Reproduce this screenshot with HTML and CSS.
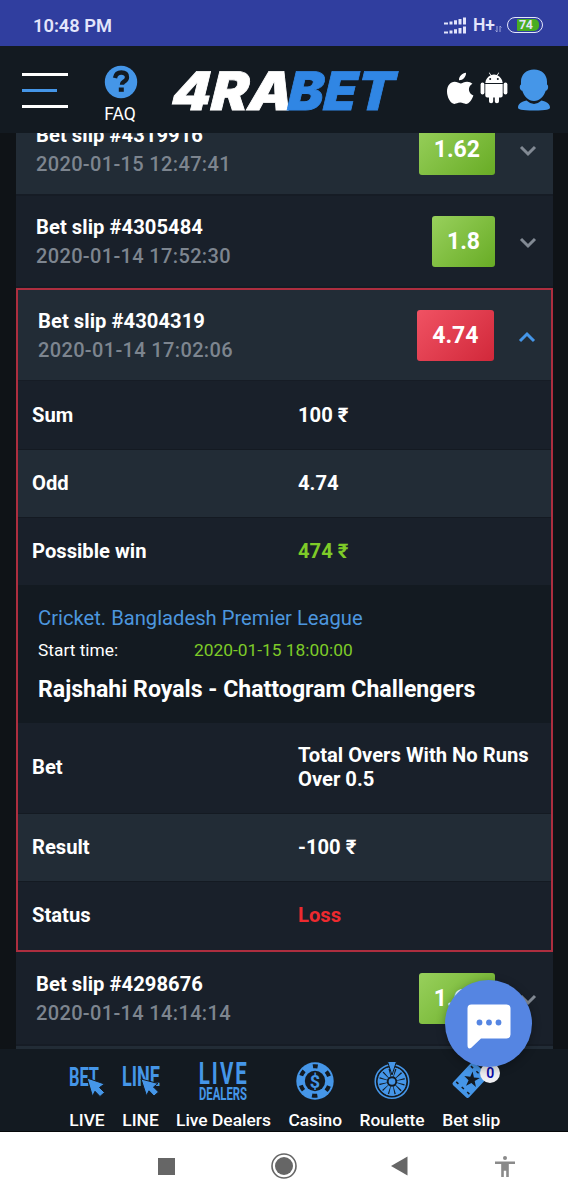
FILE: index.html
```html
<!DOCTYPE html>
<html lang="en">

<head>
    <meta charset="UTF-8">
    <meta name="viewport" content="width=device-width, initial-scale=1.0">
    <title>4RABET - Bet history</title>
    <link rel="stylesheet" href="styles.css">
</head>

<body>
    <!-- Status bar -->
    <div class="status-bar">
        <span class="clock">10:48 PM</span>
        <svg class="signal" width="22" height="17" viewBox="0 0 22 17" fill="#e3e5fb">
            <path d="M0 5.500h4v2H0zM5.500 4.500h3v3h-3zM10 3.200h3v4.300h-3zM14.500 2h3v5.500h-3zM19 .500h3v7h-3zM0 14.500h4v2H0zM5.500 13.500h3v3h-3zM10 12.200h3v4.300h-3zM14.500 11h3v5.500h-3zM19 9.500h3v7h-3z"/>
        </svg>
        <span class="network">H+</span>
        <svg class="arrows" width="7" height="8" viewBox="0 0 7 8" fill="none" stroke="#9fa6dc">
            <path d="M2 1v6L.5 5.500M5 7V1l1.500 1.500"/>
        </svg>
        <span class="battery"><span class="battery-level">74</span></span>
    </div>

    <!-- Header -->
    <header class="header">
        <div class="menu-icon"><i></i><i></i><i></i></div>
        <div class="faq">
            <svg width="34" height="34" viewBox="0 0 34 34">
                <circle cx="17" cy="17" r="16.200" fill="#4596e8"/>
                <path d="M11 13q1-5.500 6.300-5.500 5.700 0 5.700 4.700 0 2.300-2.700 4.200-2.300 1.500-2.300 3.400" fill="none" stroke="#131a21" stroke-width="4.300"/>
                <path d="M14.800 22.500h5v4.300h-5z" fill="#131a21"/>
            </svg>
            <span>FAQ</span>
        </div>
        <svg class="logo" width="230" height="50" viewBox="0 0 230 50">
            <g transform="translate(1 45) skewX(-4)">
                <text class="logo-text" x="-1" y="0" textLength="121" lengthAdjust="spacingAndGlyphs" fill="#fff" stroke="#fff">4RA</text>
                <text class="logo-text" x="115" y="0" textLength="106" lengthAdjust="spacingAndGlyphs" fill="#3086e4" stroke="#3086e4">BET</text>
            </g>
        </svg>
        <svg class="apple" width="28" height="33" viewBox="0 0 28 33" fill="#fff">
            <path d="M20 .800c.3 4-3.200 7.700-7 7.500C12.800 4.600 16.200 1 20 .800zM26.400 11.700c-5.200 3.200-4.300 9.500 1 11.700-1.400 4-4.200 8.500-7.400 8.500-2.300 0-3-1.300-5.800-1.300s-3.600 1.300-5.800 1.300C4.600 31.900 1 25.300 1 19.600c0-6 3.500-9.800 7.600-9.800 2.500 0 4.300 1.600 6 1.600 1.600 0 3.700-1.700 6.500-1.700 2 0 4 .800 5.300 2z"/>
        </svg>
        <svg class="android" width="28" height="33" viewBox="0 0 28 33" fill="#fff">
            <path d="M5.300 11C5.600 7 8 4.600 10.500 3.500L8.800.800l.6-.4 1.800 2.700q2.800-1 5.600 0L18.600.400l.6.4-1.700 2.700C20 4.600 22.400 7 22.700 11z"/>
            <circle cx="10.200" cy="7" r="1" fill="#131a21"/>
            <circle cx="17.800" cy="7" r="1" fill="#131a21"/>
            <path d="M5.300 12h17.400v11.500q0 2-2 2H19v3.700a2.100 2.100 0 0 1-4.200 0v-3.700h-1.600v3.700a2.100 2.100 0 0 1-4.200 0v-3.700H7.300q-2 0-2-2z"/>
            <rect x=".600" y="10.500" width="3.800" height="12" rx="1.900"/>
            <rect x="23.600" y="10.500" width="3.800" height="12" rx="1.900"/>
        </svg>
        <svg class="user" width="34" height="42" viewBox="0 0 34 42" fill="#4596e8">
            <path d="M17 .500c8 0 13 5.500 13 12v3c2 1 1.300 6-1.300 6.300C27 27.500 22.500 32 17 32S7 27.500 5.300 21.800C2.700 21.500 2 16.500 4 15.500v-3C4 6 9 .500 17 .500z"/>
            <path d="M9.500 31.500Q17 38.500 24.500 31.500c5 1 8.500 3.500 8.500 7 0 2-3 3-16 3s-16-1-16-3c0-3.500 3.500-6 8.500-7z"/>
        </svg>
    </header>

    <!-- Bet history -->
    <main class="history">
        <div class="slip light first">
            <div class="slip-info">
                <div class="slip-title">Bet slip #4319916</div>
                <div class="slip-date">2020-01-15 12:47:41</div>
            </div>
            <span class="odd-badge">1.62</span>
            <svg class="chevron" width="18" height="12" viewBox="0 0 18 12"><path d="M2 2l7 7 7-7"/></svg>
        </div>
        <div class="slip">
            <div class="slip-info">
                <div class="slip-title">Bet slip #4305484</div>
                <div class="slip-date">2020-01-14 17:52:30</div>
            </div>
            <span class="odd-badge">1.8</span>
            <svg class="chevron" width="18" height="12" viewBox="0 0 18 12"><path d="M2 2l7 7 7-7"/></svg>
        </div>

        <section class="slip-open">
            <div class="slip light">
                <div class="slip-info">
                    <div class="slip-title">Bet slip #4304319</div>
                    <div class="slip-date">2020-01-14 17:02:06</div>
                </div>
                <span class="odd-badge lost">4.74</span>
                <svg class="chevron active" width="18" height="12" viewBox="0 0 18 12"><path d="M2 10l7-7 7 7"/></svg>
            </div>
            <div class="row sum"><span>Sum</span><span>100 ₹</span></div>
            <div class="row light"><span>Odd</span><span>4.74</span></div>
            <div class="row win-row"><span>Possible win</span><span class="win">474 ₹</span></div>
            <div class="event">
                <div class="league">Cricket. Bangladesh Premier League</div>
                <div class="start"><span>Start time:</span><span class="start-value">2020-01-15 18:00:00</span></div>
                <div class="teams">Rajshahi Royals - Chattogram Challengers</div>
            </div>
            <div class="row tall"><span>Bet</span><span>Total Overs With No Runs<br>Over 0.5</span></div>
            <div class="row light"><span>Result</span><span>-100 ₹</span></div>
            <div class="row last"><span>Status</span><span class="loss">Loss</span></div>
        </section>

        <div class="slip next">
            <div class="slip-info">
                <div class="slip-title">Bet slip #4298676</div>
                <div class="slip-date">2020-01-14 14:14:14</div>
            </div>
            <span class="odd-badge">1.62</span>
            <svg class="chevron" width="18" height="12" viewBox="0 0 18 12"><path d="M2 2l7 7 7-7"/></svg>
        </div>
        <div class="slip light"></div>
    </main>

    <!-- Bottom menu -->
    <nav class="bottom-nav">
        <a class="nav-item">
            <svg width="36" height="42" viewBox="0 0 36 42" fill="#4596e8">
                <text class="icon-text" x="0" y="26" font-size="26" textLength="30" lengthAdjust="spacingAndGlyphs">BET</text>
                <path d="M18 18l17.500 6-5 3.500 5 5-4.500 4-5-5.200-2.500 5z" stroke="#131a21"/>
            </svg>
            <span>LIVE</span>
        </a>
        <a class="nav-item">
            <svg width="38" height="42" viewBox="0 0 38 42" fill="#4596e8">
                <text class="icon-text" x="0" y="26" font-size="27" textLength="38" lengthAdjust="spacingAndGlyphs">LINE</text>
                <path d="M19 19l17 4.500-4.500 3.500 5 5-4.500 4-5-5.200-2.500 5z" stroke="#131a21"/>
            </svg>
            <span>LINE</span>
        </a>
        <a class="nav-item">
            <svg width="50" height="42" viewBox="0 0 50 42" fill="#4596e8">
                <text class="icon-text" x="1" y="24" font-size="31" textLength="73" lengthAdjust="spacing" transform="scale(.66 1)">LIVE</text>
                <text class="icon-text" x="1" y="40" font-size="17.500" textLength="48" lengthAdjust="spacingAndGlyphs">DEALERS</text>
            </svg>
            <span>Live Dealers</span>
        </a>
        <a class="nav-item">
            <svg width="38" height="42" viewBox="0 0 38 42">
                <circle cx="19" cy="21" r="18.700" fill="#4596e8"/>
                <circle cx="19" cy="21" r="14.800" fill="none" stroke="#131a21" stroke-width="4" stroke-dasharray="5.500 10" stroke-dashoffset="2.750" transform="rotate(-90 19 21)"/>
                <circle cx="19" cy="21" r="10.200" fill="#131a21"/>
                <text class="dollar" x="19" y="27.500" text-anchor="middle" fill="#4596e8">$</text>
            </svg>
            <span>Casino</span>
        </a>
        <a class="nav-item">
            <svg width="38" height="42" viewBox="0 0 38 42" fill="none" stroke="#4596e8">
                <circle cx="19" cy="21.500" r="16.800" stroke-width="1.500"/>
                <circle cx="19" cy="21.500" r="9.700" stroke-width="9" stroke-dasharray="4.080 1" stroke-dashoffset="2"/>
                <circle cx="19" cy="21.500" r="13.600" stroke-width="1.300"/>
                <circle cx="19" cy="21.500" r="3.300" fill="#4596e8" stroke="none"/>
                <path d="M14.500 1.500h9L19 15z" fill="#4596e8" stroke="#131a21"/>
            </svg>
            <span>Roulette</span>
        </a>
        <a class="nav-item slip-item">
            <svg width="38" height="42" viewBox="0 0 38 42">
                <g transform="rotate(-47 18 21)">
                    <rect x="3.500" y="9.500" width="31" height="22" rx="2" fill="#4596e8"/>
                    <path d="M8 11.500v19M29.500 11.500v19" stroke="#131a21" stroke-width="1.500" stroke-dasharray="3 4.500" fill="none"/>
                </g>
                <path d="M19.500 11.500l2.100 5.600 6-.2-4.700 3.700 2 5.700-5-3.300-4.900 3.500 1.700-5.800-4.800-3.600 6-.1z" fill="#131a21" transform="rotate(8 19.500 19.500)"/>
            </svg>
            <span class="slip-count">0</span>
            <span>Bet slip</span>
        </a>
    </nav>

    <!-- Chat button -->
    <div class="chat">
        <svg width="44" height="45" viewBox="0 0 44 45">
            <path d="M4.500.500h35q4 0 4 4v26q0 4-4 4H14L4 44Q.500 45.500.500 41V4.500q0-4 4-4z" fill="#fff"/>
            <circle cx="12.500" cy="18.500" r="2.900" fill="#5585e2"/>
            <circle cx="22" cy="18.500" r="2.900" fill="#5585e2"/>
            <circle cx="31.500" cy="18.500" r="2.900" fill="#5585e2"/>
        </svg>
    </div>

    <!-- System navigation -->
    <footer class="system-nav">
        <svg width="17" height="17" viewBox="0 0 17 17"><path d="M0 0h17v17H0z" fill="#666"/></svg>
        <svg class="home" width="26" height="26" viewBox="0 0 26 26">
            <circle cx="13" cy="13" r="12" fill="none" stroke="#666" stroke-width="1.600"/>
            <circle cx="13" cy="13" r="9" fill="#666"/>
        </svg>
        <svg class="back" width="17" height="20" viewBox="0 0 17 20"><path d="M0 10L16.500.500v19z" fill="#666"/></svg>
        <svg class="access" width="20" height="21" viewBox="0 0 20 21" fill="#8a8a8a">
            <circle cx="10" cy="2" r="2"/>
            <path d="M0 5.500h20V8h-6.200v13h-2.600v-6.300H8.800V21H6.200V8H0z"/>
        </svg>
    </footer>
</body>

</html>
```
FILE: styles.css
```css
* {
    box-sizing: border-box;
}

body {
    margin: 0;
    height: 1200px;
    overflow: hidden;
    display: flex;
    flex-direction: column;
    font-family: Roboto, "Noto Sans", sans-serif;
    background-color: #0f1317;
    color: #fff;
}

svg {
    display: block;
    flex: none;
    overflow: visible;
}

/* Status bar */
.status-bar {
    height: 46px;
    flex: none;
    display: flex;
    align-items: center;
    padding: 4px 25px 0 33px;
    background-color: #303e9f;
    color: #e3e5fb;
}

.clock {
    flex: 1;
    font-size: 18.3px;
    font-weight: 600;
}

.network {
    margin-left: 7px;
    font-size: 17.5px;
    font-weight: 600;
}

.arrows {
    margin: 8px 5px 0 0;
}

.battery {
    width: 36px;
    height: 16px;
    padding: 1px 3px 1px 9px;
    border: 1.5px solid #e3e5fb;
    border-radius: 8px;
}

.battery-level {
    display: block;
    height: 12px;
    border-radius: 1px 5px 5px 1px;
    background-color: #49ad22;
    font-size: 12.5px;
    font-weight: 700;
    line-height: 12px;
    letter-spacing: -0.5px;
    padding-left: 2px;
}

/* Header */
.header {
    height: 87px;
    flex: none;
    display: flex;
    align-items: flex-start;
    padding: 19px 15px 0 22px;
    background-color: #131a21;
}

.menu-icon {
    width: 46px;
    margin-top: 8px;
    display: flex;
    flex-direction: column;
    gap: 13px;
}

.menu-icon i {
    height: 3px;
    background-color: #fff;
}

.menu-icon i:nth-child(2) {
    width: 35px;
    background-color: #4596e8;
}

.faq {
    width: 40px;
    margin-left: 33px;
    display: flex;
    flex-direction: column;
    align-items: center;
    font-size: 17.5px;
    line-height: 20px;
}

.faq span {
    margin-top: 5px;
    margin-left: -2px;
}

.logo {
    margin-left: 30px;
}

.logo-text {
    font: italic 900 53px Inter, sans-serif;
    stroke-width: 0.8px;
}

.apple {
    margin: 7px 0 0 45px;
}

.android {
    margin: 7px 0 0 6px;
}

.user {
    margin: 4px 0 0 9px;
}

/* Bet history */
.history {
    height: 916px;
    flex: none;
    overflow: hidden;
    padding: 0 15px 0 16px;
    display: flex;
    flex-direction: column;
}

.slip {
    height: 92px;
    flex: none;
    display: flex;
    align-items: center;
    padding: 0 16px 0 20px;
    background-color: #19202a;
    border-bottom: 2px solid #161c25;
}

.light {
    background-color: #222c36;
}

.first {
    margin-top: -29px;
}

.next {
    height: 94px;
}

.slip-info {
    flex: 1;
    padding-top: 1px;
}

.slip-title {
    font-size: 20.2px;
    font-weight: 700;
    line-height: 29px;
    letter-spacing: 0.05px;
}

.slip-date {
    font-size: 20px;
    font-weight: 500;
    line-height: 29px;
    letter-spacing: 0.35px;
    color: #7d858f;
}

.odd-badge {
    height: 51px;
    padding: 0 15px;
    border-radius: 3px;
    background-image: linear-gradient(135deg, #98d05c, #68ac25);
    font-size: 23px;
    font-weight: 700;
    line-height: 51px;
}

.lost {
    background-image: linear-gradient(135deg, #f05263, #d1283a);
}

.chevron {
    margin: 4px 0 0 24px;
    fill: none;
    stroke: #828a94;
    stroke-width: 3;
}

.active {
    stroke: #4596e8;
}

.slip-open {
    height: 664px;
    flex: none;
    border: 2px solid #ad2e3f;
}

.slip-open .slip {
    height: 91px;
    padding: 0 15.5px 0 20px;
    border-bottom-width: 1px;
}

.row {
    height: 68px;
    display: grid;
    grid-template-columns: 266px 1fr;
    align-items: center;
    padding: 0 0 1px 14px;
    background-color: #19202a;
    border-bottom: 1px solid #141a22;
    font-size: 20.2px;
    font-weight: 700;
    line-height: 24px;
}

.row.light {
    background-color: #222c36;
}

.row.sum {
    height: 69px;
}

.row.win-row {
    height: 67px;
    border-bottom: none;
}

.row.last {
    padding-bottom: 2px;
    border-bottom: none;
}

.row.tall {
    height: 91px;
    padding-bottom: 3px;
}

.win {
    color: #7ecb28;
}

.loss {
    color: #ed2a2f;
}

.event {
    height: 138px;
    padding: 19px 20px 0;
    background-color: #131a21;
}

.league {
    font-size: 20.2px;
    line-height: 28px;
    color: #4c96de;
}

.start {
    display: flex;
    margin-top: 5px;
    font-size: 17.35px;
    line-height: 26px;
}

.start span:first-child {
    width: 156px;
}

.start-value {
    color: #7ecb28;
}

.teams {
    margin-top: 11px;
    font-size: 23.1px;
    font-weight: 700;
    line-height: 32px;
    white-space: nowrap;
}

/* Bottom menu */
.bottom-nav {
    height: 83px;
    flex: none;
    display: flex;
    gap: 17.5px;
    padding: 11px 0 0 69px;
    background-color: #131a21;
    border-bottom: 1px solid #06080a;
}

.nav-item {
    position: relative;
    display: flex;
    flex-direction: column;
    align-items: center;
    font-size: 17.4px;
    font-weight: 500;
    line-height: 22px;
}

.nav-item:nth-child(2) {
    margin: 0 -1px;
}

.nav-item > span:last-child {
    margin-top: 7px;
    white-space: nowrap;
}

.icon-text {
    font-family: Roboto, sans-serif;
    font-weight: 700;
}

.dollar {
    font: 700 18px Roboto, sans-serif;
}

.slip-count {
    position: absolute;
    top: 3px;
    right: 0;
    width: 20px;
    height: 20px;
    border-radius: 50%;
    background-color: #efeff2;
    color: #0a0aa8;
    font-size: 14px;
    font-weight: 600;
    line-height: 20px;
    text-align: center;
}

/* Chat button */
.chat {
    position: absolute;
    left: 445px;
    top: 980px;
    width: 87px;
    height: 87px;
    padding: 24px 22px;
    border-radius: 50%;
    background-color: #5585e2;
    box-shadow: 0 2px 10px rgba(0, 0, 0, 0.3);
}

/* System navigation */
.system-nav {
    height: 68px;
    display: flex;
    align-items: center;
    padding-left: 158px;
    background-color: #fff;
}

.home {
    margin-left: 96px;
}

.back {
    margin-left: 94px;
}

.access {
    margin-left: 87px;
}
```
